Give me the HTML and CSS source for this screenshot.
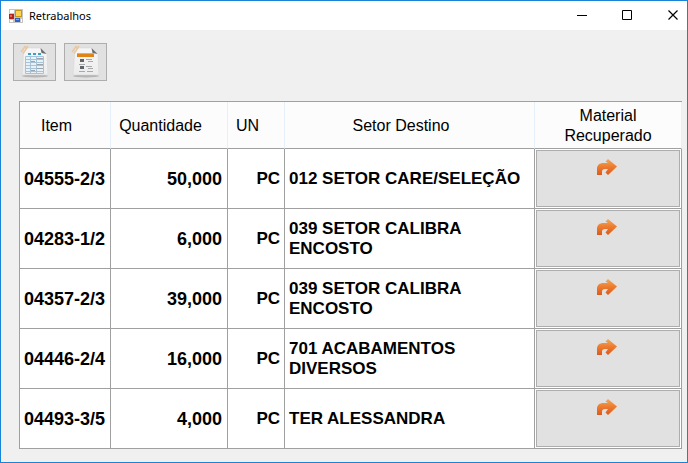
FILE: index.html
```html
<!DOCTYPE html>
<html lang="pt-BR">
<head>
    <meta charset="utf-8">
    <title>Retrabalhos</title>
    <link rel="stylesheet" href="styles.css">
</head>
<body>
    <svg class="defs" width="0" height="0" aria-hidden="true">
        <defs>
            <linearGradient id="orange" x1="0" y1="0" x2="0" y2="1">
                <stop offset="0" stop-color="#f3a85a"/>
                <stop offset="0.5" stop-color="#ec7a2e"/>
                <stop offset="1" stop-color="#dd5a1c"/>
            </linearGradient>
            <linearGradient id="paper" x1="0" y1="0" x2="0" y2="1">
                <stop offset="0" stop-color="#f7f7f7"/>
                <stop offset="1" stop-color="#ececec"/>
            </linearGradient>
            <symbol id="arrow" viewBox="0 0 22 18">
                <path fill="url(#orange)" d="M1 17V11C1 7 3.500 5 7.500 5H12L9.500 3.500L12 1L21 8.500L12 17L9.500 14.500L12 11H9C7 11 6 12 6 13.500V17Z"/>
            </symbol>
            <symbol id="sheet" viewBox="0 0 30 34">
                <ellipse cx="15" cy="31" rx="13" ry="1.500" fill="#b5b5b5"/>
                <path fill="url(#paper)" stroke="#d2d2d2" stroke-width="0.500" d="M4 3H21L27 9L28 30H2Z"/>
                <path fill="#6b6b6b" d="M20.500 3L26.500 9L21.500 8Z"/>
                <path fill="none" stroke="#e9c7a0" stroke-width="1.500" d="M1 7L5 1.500L7 3L3 8.500M5 5L8 1"/>
            </symbol>
        </defs>
    </svg>

    <div class="window">
        <header class="titlebar">
            <svg class="app-icon" width="14" height="14" viewBox="0 0 14 14" aria-hidden="true">
                <path fill="#c4c4c4" d="M0 0H14V14H0Z"/>
                <path fill="#fff" d="M1 1H5V4H1ZM1 11H4V13H1ZM12 10H13V13H12Z"/>
                <path fill="#b3241c" d="M0 5H5V10H0Z"/>
                <path fill="#e26a5b" d="M1 6H3V8H1Z"/>
                <path fill="#c99716" d="M6 1H13V8H6Z"/>
                <path fill="#ffd351" d="M7 2H12V7H7Z"/>
                <path fill="#2e62c4" d="M6 9H11V13H6Z"/>
                <path fill="#82acf0" d="M7 10H10V11H7Z"/>
            </svg>
            <h1>Retrabalhos</h1>
            <div class="window-controls">
                <button type="button" aria-label="Minimizar">
                    <svg width="11" height="11" viewBox="0 0 11 11"><path fill="#000" d="M1 5H11V6H1Z"/></svg>
                </button>
                <button type="button" aria-label="Maximizar">
                    <svg width="11" height="11" viewBox="0 0 11 11"><path fill="none" stroke="#000" d="M0.500 0.500H9.500V9.500H0.500Z"/></svg>
                </button>
                <button type="button" aria-label="Fechar">
                    <svg width="11" height="11" viewBox="0 0 11 11"><path fill="none" stroke="#000" stroke-width="1.200" d="M0.500 0.500L9.500 9.500M9.500 0.500L0.500 9.500"/></svg>
                </button>
            </div>
        </header>

        <main>
            <div class="toolbar">
                <button type="button" aria-label="Planilha">
                    <svg width="30" height="34" viewBox="0 0 30 34">
                        <use href="#sheet"/>
                        <path fill="#3ba0c9" d="M8 8H11V10H8ZM13 8H16V10H13ZM18 8H21V10H18Z"/>
                        <path fill="#e9f1f8" stroke="#a8c2d8" d="M5.500 11.500H23.500V28.500H5.500Z"/>
                        <path fill="none" stroke="#a8c2d8" d="M5.500 14.500H23.500M5.500 17.500H23.500M5.500 20.500H23.500M5.500 23.500H23.500M5.500 26.500H23.500M10.500 11.500V28.500M16.500 11.500V28.500"/>
                        <path fill="none" stroke="#9aa5ae" d="M17 13.500H23M11 16.500H15M17 19.500H23M11 25.500H15M17 23.500H23"/>
                    </svg>
                </button>
                <button type="button" aria-label="Relatório">
                    <svg width="30" height="34" viewBox="0 0 30 34">
                        <use href="#sheet"/>
                        <path fill="#dd8519" d="M6 8H23V12H6Z"/>
                        <path fill="#f4ab48" d="M6 8H23V9H6Z"/>
                        <path fill="#5f6468" d="M9 14H13V17H9ZM9 21H13V24H9Z"/>
                        <path fill="none" stroke="#a7aaad" d="M15 14.500H21M17 16.500H22M8 19.500H14M15 21.500H21M17 23.500H22M8 26.500H14M16 26.500H22"/>
                    </svg>
                </button>
            </div>

            <table class="grid">
                <colgroup>
                    <col class="col-item">
                    <col class="col-qty">
                    <col class="col-unit">
                    <col>
                    <col class="col-action">
                </colgroup>
                <thead>
                    <tr>
                        <th scope="col">Item</th>
                        <th scope="col">Quantidade</th>
                        <th scope="col">UN</th>
                        <th scope="col">Setor Destino</th>
                        <th scope="col" class="action">Material Recuperado</th>
                    </tr>
                </thead>
                <tbody>
                    <tr>
                        <td class="number">04555-2/3</td>
                        <td class="number">50,000</td>
                        <td class="unit">PC</td>
                        <td>012 SETOR CARE/SELEÇÃO</td>
                        <td class="action"><button type="button" aria-label="Recuperar 04555-2/3"><svg width="22" height="18"><use href="#arrow"/></svg></button></td>
                    </tr>
                    <tr>
                        <td class="number">04283-1/2</td>
                        <td class="number">6,000</td>
                        <td class="unit">PC</td>
                        <td>039 SETOR CALIBRA ENCOSTO</td>
                        <td class="action"><button type="button" aria-label="Recuperar 04283-1/2"><svg width="22" height="18"><use href="#arrow"/></svg></button></td>
                    </tr>
                    <tr>
                        <td class="number">04357-2/3</td>
                        <td class="number">39,000</td>
                        <td class="unit">PC</td>
                        <td>039 SETOR CALIBRA ENCOSTO</td>
                        <td class="action"><button type="button" aria-label="Recuperar 04357-2/3"><svg width="22" height="18"><use href="#arrow"/></svg></button></td>
                    </tr>
                    <tr>
                        <td class="number">04446-2/4</td>
                        <td class="number">16,000</td>
                        <td class="unit">PC</td>
                        <td>701 ACABAMENTOS DIVERSOS</td>
                        <td class="action"><button type="button" aria-label="Recuperar 04446-2/4"><svg width="22" height="18"><use href="#arrow"/></svg></button></td>
                    </tr>
                    <tr>
                        <td class="number">04493-3/5</td>
                        <td class="number">4,000</td>
                        <td class="unit">PC</td>
                        <td>TER ALESSANDRA</td>
                        <td class="action"><button type="button" aria-label="Recuperar 04493-3/5"><svg width="22" height="18"><use href="#arrow"/></svg></button></td>
                    </tr>
                </tbody>
            </table>
        </main>
    </div>
</body>
</html>
```
FILE: styles.css
```css
* {
    box-sizing: border-box;
}

body {
    margin: 0;
    font-family: "Liberation Sans", Arial, sans-serif;
    color: #000;
}

button {
    padding: 0;
    cursor: pointer;
}

svg {
    display: block;
}

.window {
    min-height: 100vh;
    border: 1px solid #1883d7;
    background-color: #f0f0f0;
}

.titlebar {
    display: flex;
    align-items: center;
    gap: 6px;
    height: 29px;
    padding-left: 8px;
    background-color: #fff;
}

.titlebar h1 {
    margin: 0;
    font-family: "Noto Sans", sans-serif;
    font-size: 11px;
    font-weight: normal;
}

.window-controls {
    display: flex;
    gap: 19px;
    margin-left: auto;
}

.window-controls button {
    display: flex;
    align-items: center;
    justify-content: center;
    width: 27px;
    height: 27px;
    border: none;
    background: none;
}

main {
    padding: 13px 5px 13px 18px;
}

.toolbar {
    display: flex;
    gap: 8px;
    margin: 0 0 20px -6px;
}

.toolbar button {
    display: flex;
    align-items: center;
    justify-content: center;
    width: 43px;
    height: 38px;
    border: 1px solid #adadad;
    background-color: #e1e1e1;
}

.grid {
    width: 100%;
    table-layout: fixed;
    border-collapse: separate;
    border-spacing: 0;
    border-top: 1px solid #a0a0a0;
    border-left: 1px solid #a0a0a0;
    background-color: #fff;
}

.col-item {
    width: 91px;
}

.col-qty {
    width: 117px;
}

.col-unit {
    width: 57px;
}

.col-action {
    width: 147px;
}

.grid th {
    height: 47px;
    padding: 4px 17px 2px 0;
    border-right: 1px solid #e5f0fb;
    border-bottom: 1px solid #a0a0a0;
    background-color: #fcfcfc;
    font-size: 16px;
    font-weight: normal;
    line-height: 20px;
    text-align: center;
}

.grid th.action {
    padding: 4px 24px 2px;
}

.grid td {
    height: 60px;
    padding: 0 4px;
    border-right: 1px solid #a0a0a0;
    border-bottom: 1px solid #a0a0a0;
    font-size: 17px;
    font-weight: bold;
    line-height: 20px;
}

.grid td.number {
    padding: 0 5px 0 0;
    font-size: 18px;
    text-align: right;
    white-space: nowrap;
}

.grid td.unit {
    text-align: right;
}

.grid td.action {
    padding: 1px;
}

.grid td button {
    display: flex;
    justify-content: center;
    width: 100%;
    height: 57px;
    padding: 7px 2px 0 0;
    border: 1px solid #adadad;
    background-color: #e1e1e1;
}

.grid td button:hover,
.toolbar button:hover {
    border-color: #0078d7;
    background-color: #e5f1fb;
}
```
